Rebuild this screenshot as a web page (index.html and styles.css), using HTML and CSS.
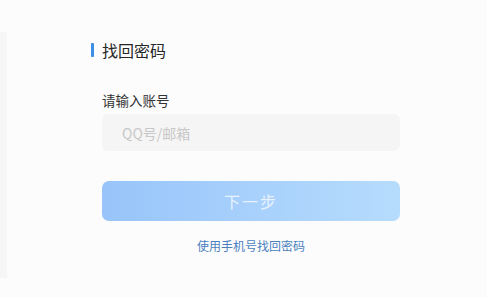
FILE: index.html
```html
<!DOCTYPE html>
<html lang="zh">
<head>
<meta charset="utf-8">
<title>找回密码</title>
<link rel="stylesheet" href="styles.css">
</head>
<body>
<main class="page">
  <form class="form">
    <h1 class="title"><span class="bar"></span>找回密码</h1>
    <label class="label" for="acct">请输入账号</label>
    <input class="input" id="acct" type="text" placeholder="QQ号/邮箱">
    <button class="btn" type="button">下一步</button>
    <a class="link" href="#">使用手机号找回密码</a>
  </form>
</main>
</body>
</html>
```
FILE: styles.css
```css
html, body {
  margin: 0;
  padding: 0;
}
body {
  width: 487px;
  height: 297px;
  overflow: hidden;
  font-family: "Noto Sans CJK SC", "Noto Sans", sans-serif;
  background: linear-gradient(#f6f6f6, #f6f6f6) 0 32px / 7px 246px no-repeat, #fcfcfc;
}
.page {
  padding-top: 38px;
  padding-left: 102px;
}
.form {
  width: 298px;
  display: flex;
  flex-direction: column;
}
.title {
  margin: 0 0 0 -11px;
  display: flex;
  align-items: center;
  gap: 8px;
  font-size: 16px;
  line-height: 24px;
  font-weight: 400;
  color: #262626;
}
.bar {
  width: 3px;
  height: 14px;
  background: #3d8ee6;
  border-radius: 1px;
}
.label {
  margin-top: 28px;
  font-size: 13.5px;
  line-height: 20px;
  color: #333;
}
.input {
  margin-top: 4px;
  height: 37px;
  box-sizing: border-box;
  border: none;
  outline: none;
  border-radius: 6px;
  background: #f5f5f5;
  padding: 0 0 0 20px;
  font-family: inherit;
  font-size: 14px;
  color: #333;
}
.input::placeholder {
  color: #c8c8c8;
}
.btn {
  margin-top: 30px;
  height: 40px;
  border: none;
  border-radius: 7px;
  background: linear-gradient(90deg, #98c4fa 0%, #b6dcfd 100%);
  color: #e8f2fe;
  font-family: inherit;
  font-size: 16px;
  letter-spacing: 2px;
  padding: 0;
}
.link {
  margin-top: 16px;
  align-self: center;
  font-size: 12px;
  line-height: 18px;
  color: #4a7fbf;
  text-decoration: none;
}
```
